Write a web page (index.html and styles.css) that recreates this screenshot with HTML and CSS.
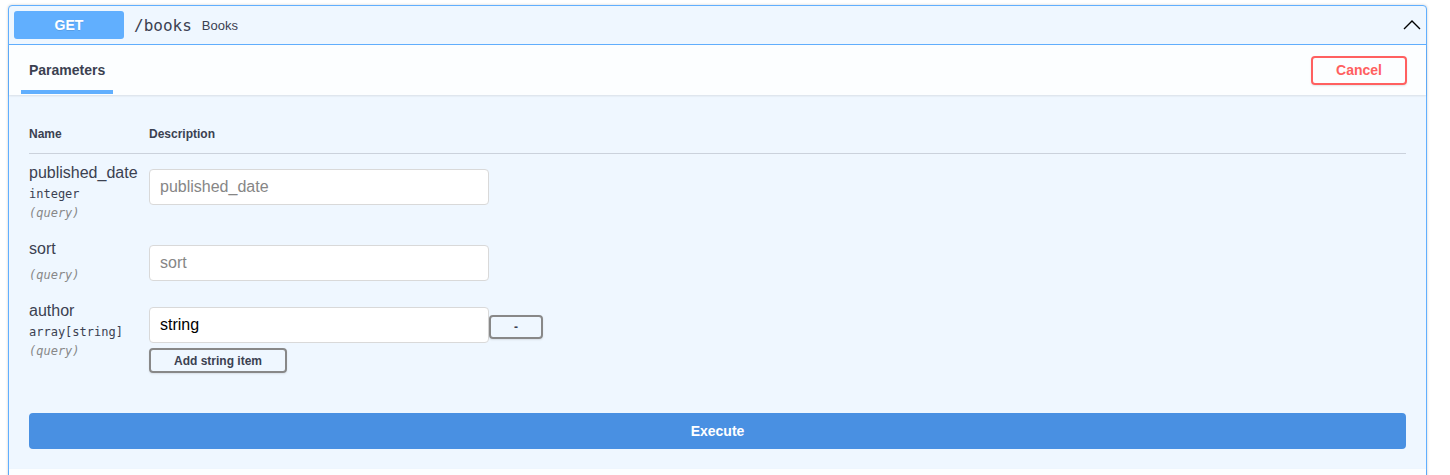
FILE: index.html
```html
<!DOCTYPE html>
<html lang="en">
<head>
<meta charset="utf-8">
<title>GET /books</title>
<link rel="stylesheet" href="styles.css">
</head>
<body>
<div class="page">
  <div class="opblock">
    <div class="summary">
      <span class="method">GET</span>
      <span class="path">/books</span>
      <span class="summary-desc">Books</span>
      <svg class="arrow" width="20" height="20" viewBox="0 0 20 20" aria-hidden="true">
        <polyline points="3,14 11,6 19,14" fill="none" stroke="#000" stroke-width="1.4"/>
      </svg>
    </div>

    <div class="section-header">
      <div class="tab"><h4 class="tab-title">Parameters</h4></div>
      <button class="btn cancel">Cancel</button>
    </div>

    <div class="table-container">
      <div class="params">
        <div class="head-row">
          <div class="th">Name</div>
          <div class="th">Description</div>
        </div>

        <div class="row">
          <div class="col-name">
            <div class="param-name">published_date</div>
            <div class="param-type">integer</div>
            <div class="param-in">(query)</div>
          </div>
          <div class="col-desc">
            <input class="text-input" type="text" placeholder="published_date">
          </div>
        </div>

        <div class="row">
          <div class="col-name">
            <div class="param-name">sort</div>
            <div class="param-type"></div>
            <div class="param-in">(query)</div>
          </div>
          <div class="col-desc">
            <input class="text-input" type="text" placeholder="sort">
          </div>
        </div>

        <div class="row">
          <div class="col-name">
            <div class="param-name">author</div>
            <div class="param-type">array[string]</div>
            <div class="param-in">(query)</div>
          </div>
          <div class="col-desc">
            <div class="array-item">
              <input class="text-input" type="text" value="string">
              <button class="btn btn-small remove">-</button>
            </div>
            <button class="btn btn-small add">Add string item</button>
          </div>
        </div>
      </div>
    </div>

    <div class="execute-wrapper">
      <button class="btn execute">Execute</button>
    </div>

    <div class="responses-header"></div>
  </div>
</div>
</body>
</html>
```

FILE: styles.css
```css
html, body {
  margin: 0;
  padding: 0;
  overflow: hidden;
  background: #ffffff;
}

body {
  font-family: "Liberation Sans", Arial, sans-serif;
  color: #3b4151;
}

.page {
  padding: 5px 23px 0 8px;
}

.opblock {
  border: 1px solid #61affe;
  border-radius: 4px;
  background: #eff7ff;
  box-shadow: 0 0 3px rgba(0, 0, 0, 0.19);
}

/* summary bar */
.summary {
  display: flex;
  align-items: center;
  padding: 5px;
  border-bottom: 1px solid #61affe;
}

.method {
  width: 110px;
  height: 28px;
  line-height: 28px;
  text-align: center;
  background: #61affe;
  color: #ffffff;
  font-size: 14px;
  font-weight: 700;
  border-radius: 3px;
  text-shadow: 0 1px 0 rgba(0, 0, 0, 0.1);
}

.path {
  padding: 0 10px;
  font-family: "DejaVu Sans Mono", monospace;
  font-size: 16px;
  color: #3b4151;
}

.summary-desc {
  flex: 1 1 auto;
  font-size: 13px;
  color: #3b4151;
}

.arrow {
  display: block;
  flex: none;
}

/* section header */
.section-header {
  display: flex;
  align-items: center;
  justify-content: space-between;
  height: 50px;
  padding: 0 19px 0 12px;
  background: rgba(255, 255, 255, 0.8);
  box-shadow: 0 1px 2px rgba(0, 0, 0, 0.1);
}

.tab {
  position: relative;
  align-self: stretch;
  display: flex;
  align-items: center;
  padding: 0 8px;
}

.tab::after {
  content: "";
  position: absolute;
  left: 0;
  right: 0;
  bottom: 1px;
  height: 4px;
  background: #61affe;
}

.tab-title {
  margin: 0;
  font-size: 14px;
  font-weight: 700;
  color: #3b4151;
}

.btn {
  font-family: "Liberation Sans", Arial, sans-serif;
  font-weight: 700;
  background: transparent;
  border: 2px solid #888888;
  border-radius: 4px;
  box-shadow: 0 1px 2px rgba(0, 0, 0, 0.1);
  color: #3b4151;
  cursor: pointer;
}

.cancel {
  padding: 5px 23px;
  font-size: 14px;
  line-height: 15px;
  border-color: #ff6060;
  color: #ff6060;
}

/* parameters table */
.table-container {
  padding: 20px 20px 10px;
}

.head-row,
.row {
  display: grid;
  grid-template-columns: 120px 1fr;
}

.head-row {
  border-bottom: 1px solid rgba(59, 65, 81, 0.2);
}

.th {
  padding: 12px 0;
  font-size: 12px;
  line-height: 14px;
  font-weight: 700;
}

.row {
  padding: 10px 0;
}

.param-name {
  font-size: 16px;
  line-height: 18px;
}

.param-type {
  padding: 5px 0;
  font-family: "DejaVu Sans Mono", monospace;
  font-size: 12px;
  line-height: 14px;
}

.param-in {
  font-family: "DejaVu Sans Mono", monospace;
  font-size: 12px;
  line-height: 14px;
  font-style: italic;
  color: #888888;
}

.col-desc {
  display: flex;
  flex-direction: column;
  align-items: flex-start;
}

.text-input {
  box-sizing: border-box;
  width: 340px;
  height: 36px;
  margin: 5px 0 0;
  padding: 8px 10px;
  border: 1px solid #d9d9d9;
  border-radius: 4px;
  background: #ffffff;
  font-family: "Liberation Sans", Arial, sans-serif;
  font-size: 16px;
  color: #000000;
  outline: none;
}

.text-input::placeholder {
  color: #868686;
}

.array-item {
  display: flex;
  align-items: flex-start;
}

.btn-small {
  font-size: 12px;
  padding: 0;
}

.remove {
  width: 54px;
  height: 24px;
  margin-top: 13px;
}

.add {
  width: 138px;
  height: 25px;
  margin-top: 5px;
}

/* execute */
.execute-wrapper {
  padding: 20px;
}

.execute {
  display: block;
  width: 100%;
  height: 36px;
  background: #4990e2;
  border-color: #4990e2;
  color: #ffffff;
  font-size: 14px;
  box-shadow: none;
}

.responses-header {
  height: 50px;
  background: rgba(255, 255, 255, 0.8);
  box-shadow: 0 1px 2px rgba(0, 0, 0, 0.1);
}
```
